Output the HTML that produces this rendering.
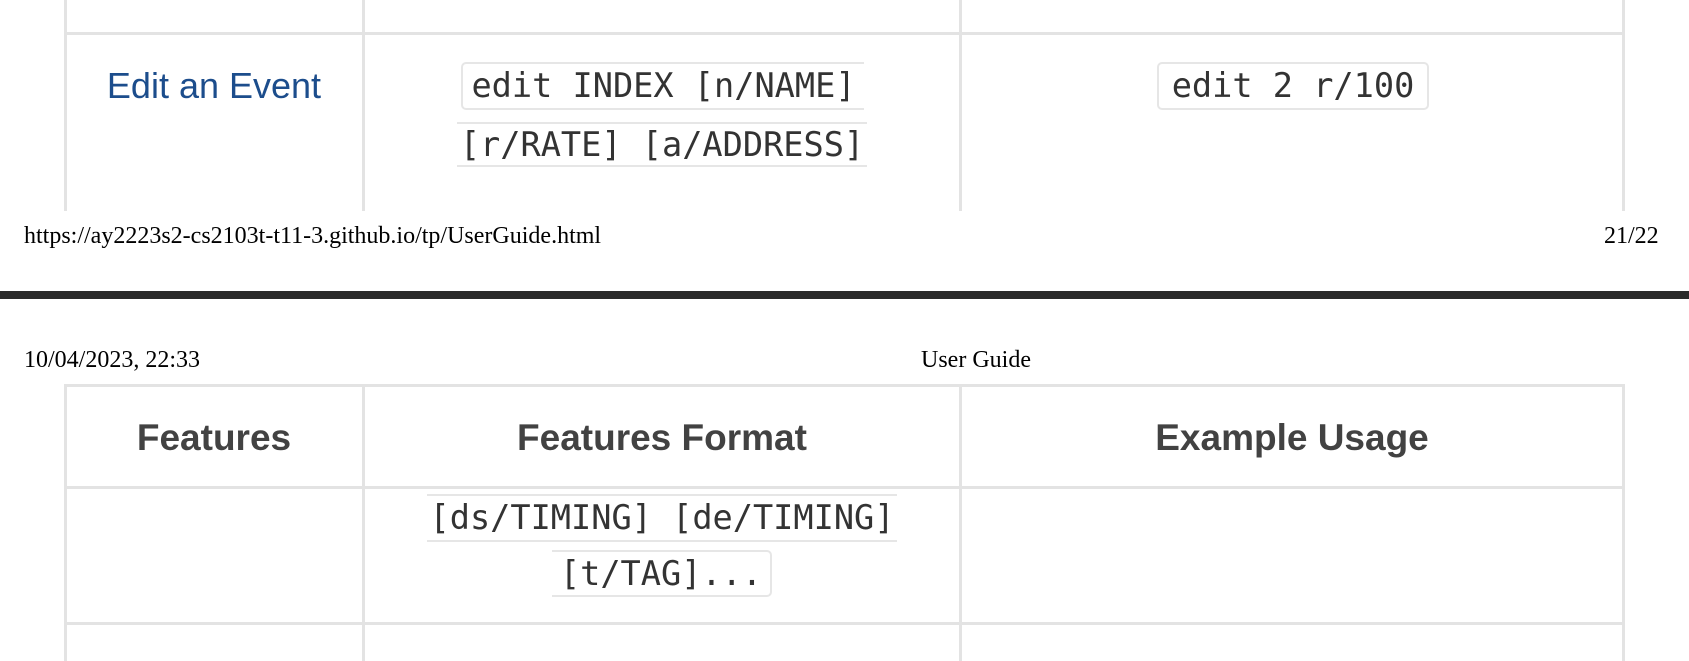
<!DOCTYPE html>
<html><head><meta charset="utf-8"><style>
body{margin:0;width:1689px;height:661px;position:relative;background:#fff;overflow:hidden}
.v{position:absolute;width:3px;background:#e3e3e3}
.h{position:absolute;height:3px;background:#e3e3e3}
.c{position:absolute;box-sizing:border-box;border:2px solid #e6e6e6;background:#fff;font-family:"DejaVu Sans Mono","Liberation Mono",monospace;font-size:33.6px;color:#333;text-align:center;line-height:44px;white-space:pre}
.s{position:absolute;font-family:"Liberation Serif",serif;font-size:24px;color:#000;white-space:nowrap}
.th{position:absolute;font-family:"Liberation Sans",sans-serif;font-weight:bold;font-size:37px;color:#424242;text-align:center;top:416px;line-height:44px}
</style></head><body>
<!-- top table -->
<div class="v" style="left:64px;top:0;height:211px"></div>
<div class="v" style="left:362px;top:0;height:211px"></div>
<div class="v" style="left:959px;top:0;height:211px"></div>
<div class="v" style="left:1622px;top:0;height:211px"></div>
<div class="h" style="left:64px;top:32px;width:1561px"></div>
<div style="position:absolute;left:66px;width:296px;top:65px;text-align:center;font-family:'Liberation Sans',sans-serif;font-size:36px;color:#1c4d8c;line-height:42px">Edit an Event</div>
<div class="c" style="left:461px;top:62px;width:403px;height:48px;border-radius:5px 0 0 5px;border-right:none">edit INDEX [n/NAME]</div>
<div class="c" style="left:457px;top:122px;width:410px;height:45px;border-left:none;border-right:none;line-height:41px">[r/RATE] [a/ADDRESS]</div>
<div class="c" style="left:1157px;top:62px;width:272px;height:48px;border-radius:5px">edit 2 r/100</div>
<div class="s" style="left:24px;top:223px">https://ay2223s2-cs2103t-t11-3.github.io/tp/UserGuide.html</div>
<div class="s" style="left:1604px;top:223px">21/22</div>
<div style="position:absolute;left:0;top:291px;width:1689px;height:8px;background:#2a2a2a"></div>
<div class="s" style="left:24px;top:347px">10/04/2023, 22:33</div>
<div class="s" style="left:921px;top:347px">User Guide</div>
<!-- bottom table -->
<div class="h" style="left:64px;top:384px;width:1561px"></div>
<div class="h" style="left:64px;top:486px;width:1561px"></div>
<div class="h" style="left:64px;top:622px;width:1561px"></div>
<div class="v" style="left:64px;top:384px;height:277px"></div>
<div class="v" style="left:362px;top:384px;height:277px"></div>
<div class="v" style="left:959px;top:384px;height:277px"></div>
<div class="v" style="left:1622px;top:384px;height:277px"></div>
<div class="th" style="left:66px;width:296px">Features</div>
<div class="th" style="left:365px;width:594px">Features Format</div>
<div class="th" style="left:962px;width:660px">Example Usage</div>
<div class="c" style="left:427px;top:494px;width:470px;height:48px;border-left:none;border-right:none">[ds/TIMING] [de/TIMING]</div>
<div class="c" style="left:552px;top:550px;width:220px;height:47px;border-left:none;border-radius:0 5px 5px 0">[t/TAG]...</div>
</body></html>
